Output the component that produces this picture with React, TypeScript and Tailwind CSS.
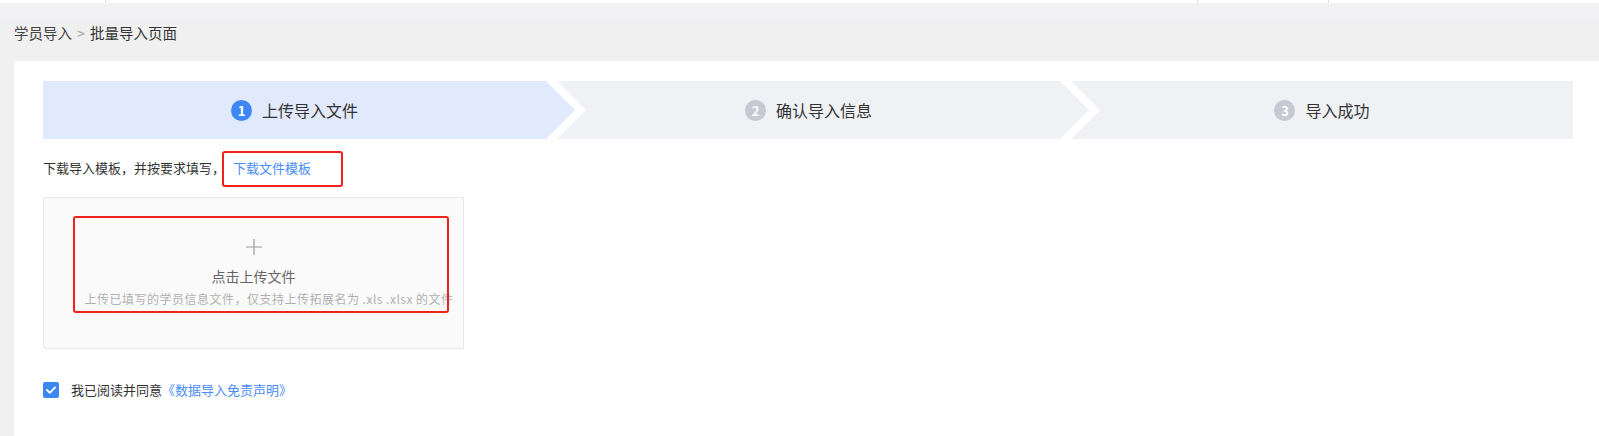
import React from "react";

const font = "font-['Noto_Sans_CJK_SC','Noto_Sans',sans-serif]";

type StepProps = {
  index: number;
  label: string;
  active?: boolean;
  shape: "first" | "middle" | "last";
};

function Step({ index, label, active, shape }: StepProps) {
  const shapeClass =
    shape === "first"
      ? "w-[532px] pr-[29px] [clip-path:polygon(0_0,calc(100%_-_29px)_0,100%_50%,calc(100%_-_29px)_100%,0_100%)]"
      : shape === "middle"
        ? "w-[532px] -ml-[18px] pr-[29px] [clip-path:polygon(0_0,calc(100%_-_29px)_0,100%_50%,calc(100%_-_29px)_100%,0_100%,29px_50%)]"
        : "flex-1 -ml-[18px] [clip-path:polygon(0_0,100%_0,100%_100%,0_100%,29px_50%)]";

  return (
    <div
      className={`flex h-full items-center justify-center ${shapeClass} ${
        active ? "bg-[#e1eafc]" : "bg-[#eff1f5]"
      }`}
    >
      <div className="flex items-center gap-[10px]">
        <span
          className={`flex h-[21px] w-[21px] items-center justify-center rounded-full text-[13px] font-bold leading-none text-white ${
            active ? "bg-[#3d87f5]" : "bg-[#c5c9d1]"
          }`}
        >
          {index}
        </span>
        <span className="text-[16px] leading-5 text-[#333]">{label}</span>
      </div>
    </div>
  );
}

export default function App() {
  return (
    <main className={`min-h-screen bg-[#f0f0f0] ${font}`}>
      {/* cut-off table row at the very top */}
      <div className="flex h-[3px] bg-white">
        <div className="w-[106px] border-r border-[#dcdcdc]" />
        <div className="w-[1092px] border-r border-[#dcdcdc]" />
        <div className="w-[131px] border-r border-[#dcdcdc]" />
        <div className="flex-1" />
      </div>

      <div className="flex h-[58px] items-center bg-[linear-gradient(to_bottom,#f2f2f4_0,#f2f2f4_18px,#f0f0f0_18px)] pl-[14px] pt-[1px] text-[14.5px] leading-5">
        <span className="text-[#444]">学员导入</span>
        <span className="mx-[5px] text-[#aaa]">&gt;</span>
        <span className="text-[#333]">批量导入页面</span>
      </div>

      <section className="ml-[14px] min-h-[375px] bg-white pl-[29px] pr-[26px] pt-[20px]">
        <div className="flex h-[58px]">
          <Step index={1} label="上传导入文件" active shape="first" />
          <Step index={2} label="确认导入信息" shape="middle" />
          <Step index={3} label="导入成功" shape="last" />
        </div>

        <div className="relative mt-[19px] flex h-5 items-center text-[13px] leading-5">
          <span className="text-[#333]">下载导入模板，并按要求填写，</span>
          <a className="ml-2 text-[#4a8cf7]">下载文件模板</a>
          <div className="pointer-events-none absolute left-[179px] top-[-7px] h-[36px] w-[121px] rounded-[3px] border-2 border-[#f0211b]" />
        </div>

        <div className="relative mt-[19px] flex h-[152px] w-[421px] flex-col items-center justify-center rounded-[2px] border border-[#e6e6e6] bg-[#fafafa]">
          <svg width="16" height="16" viewBox="0 0 16 16" className="text-[#999]">
            <path d="M8 0v16M0 8h16" stroke="currentColor" strokeWidth="1.2" fill="none" />
          </svg>
          <div className="mt-[11px] text-[14px] leading-5 text-[#666]">点击上传文件</div>
          <div className="ml-[31px] mt-[5px] whitespace-nowrap text-[12px] leading-4 tracking-[0.5px] text-[#b0b0b0]">
            上传已填写的学员信息文件，仅支持上传拓展名为 .xls .xlsx 的文件
          </div>
          <div className="pointer-events-none absolute left-[29px] top-[18px] h-[97px] w-[376px] rounded-[3px] border-2 border-[#f0211b]" />
        </div>

        <label className="mt-[31px] flex h-5 items-center text-[13px] leading-5">
          <span className="flex h-4 w-4 items-center justify-center rounded-[2px] bg-[#3d87f5]">
            <svg width="10" height="8" viewBox="0 0 10 8">
              <path d="M1 4l2.8 2.8L9 1.5" stroke="white" strokeWidth="1.8" fill="none" strokeLinecap="round" strokeLinejoin="round" />
            </svg>
          </span>
          <span className="ml-[12px] text-[#333]">我已阅读并同意</span>
          <a className="text-[#4a8cf7]">《数据导入免责声明》</a>
        </label>
      </section>
    </main>
  );
}
